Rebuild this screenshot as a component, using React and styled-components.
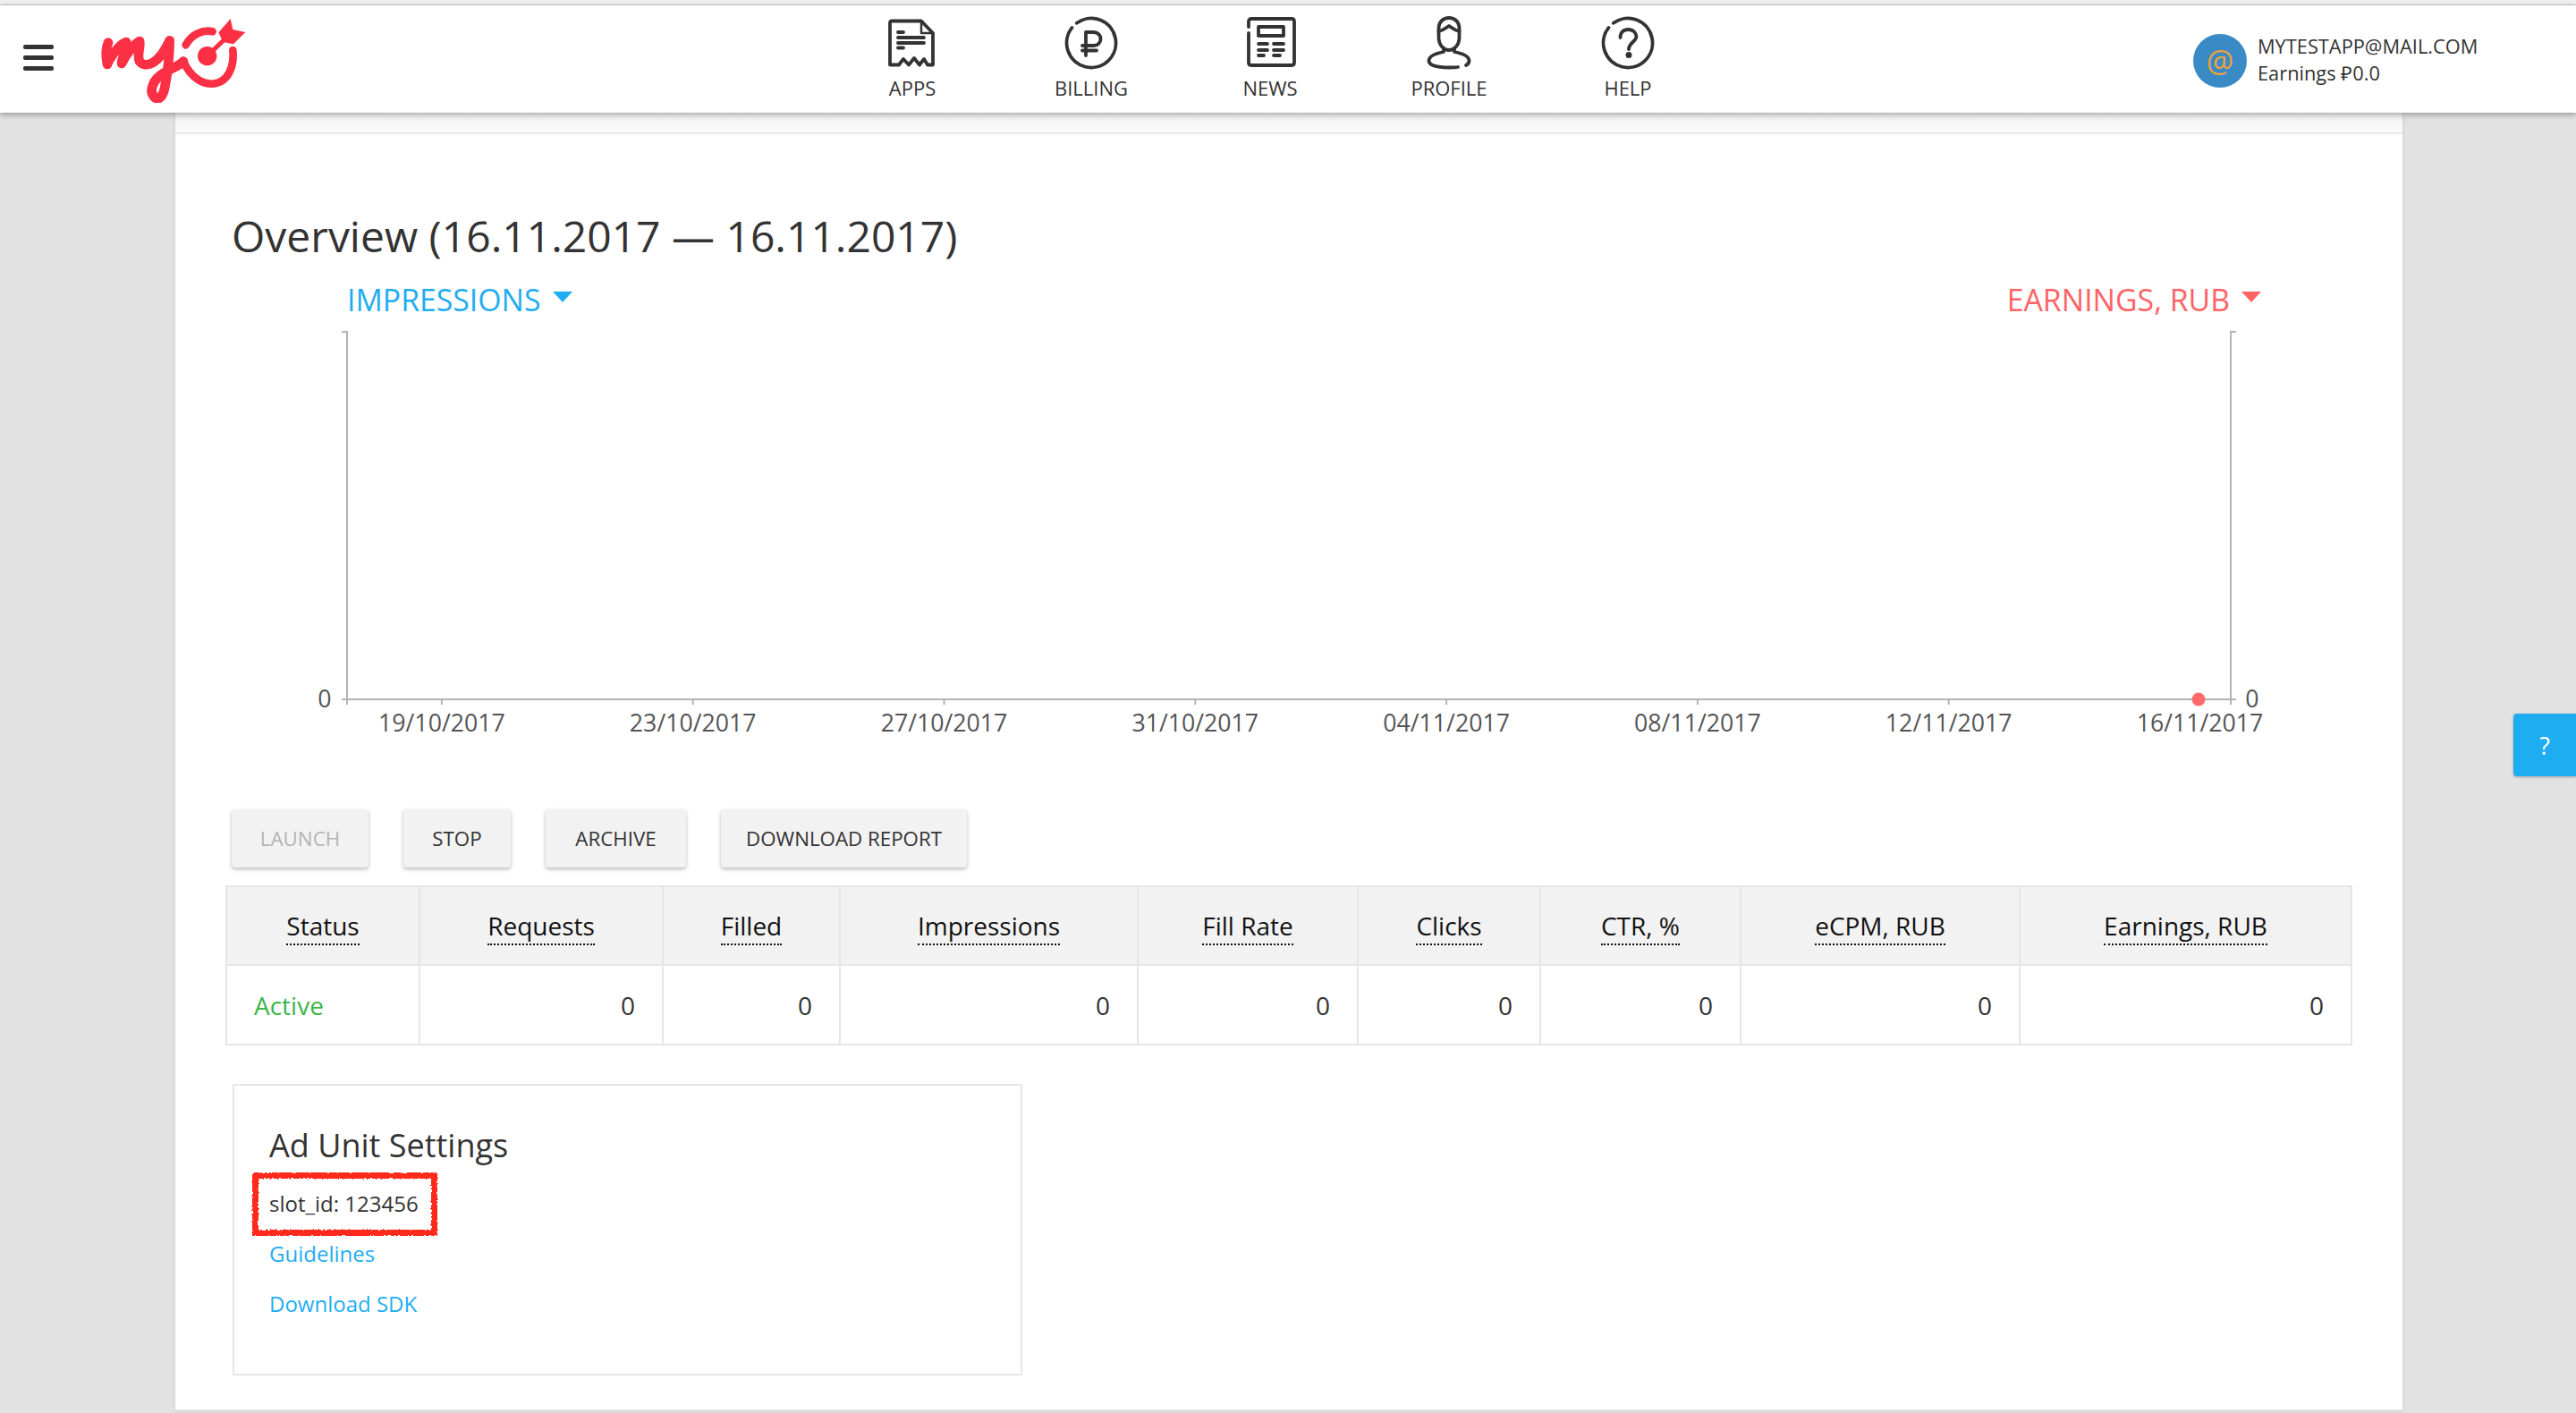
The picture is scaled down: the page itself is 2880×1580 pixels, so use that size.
import React from 'react';
import styled, { createGlobalStyle } from 'styled-components';

const GlobalStyle = createGlobalStyle`
  html, body {
    margin: 0;
    padding: 0;
    background: #e2e2e2;
    font-family: "Open Sans", "Liberation Sans", sans-serif;
    color: #333;
    overflow: hidden;
  }
`;

const Page = styled.div`
  width: 2880px;
  height: 1580px;
  position: relative;
  overflow: hidden;
`;

const TopStrip = styled.div`
  height: 5px;
  background: #f0f0f0;
  border-bottom: 1px solid #cfcfcf;
`;

const Header = styled.header`
  position: relative;
  z-index: 2;
  height: 120px;
  background: #fff;
  box-shadow: 0 2px 7px rgba(0, 0, 0, 0.35);
  display: flex;
  align-items: flex-start;
`;

const Burger = styled.div`
  width: 34px;
  margin: 44px 0 0 26px;
  display: flex;
  flex-direction: column;
  gap: 7px;
`;

const BurgerBar = styled.span`
  height: 5px;
  background: #333;
  border-radius: 2px;
`;

const LogoSvg = styled.svg`
  width: 164px;
  height: 98px;
  margin: 11px 0 0 51px;
`;

const Nav = styled.nav`
  display: flex;
  margin-left: 645px;
`;

const NavItem = styled.div`
  width: 200px;
  display: flex;
  flex-direction: column;
  align-items: center;
  padding-top: 12px;
  font-size: 22px;
  line-height: 30px;
  color: #333;
`;

const NavIcon = styled.svg`
  width: 60px;
  height: 60px;
  margin-bottom: 5px;
  fill: none;
  stroke: #333;
  stroke-width: 3.8;
  stroke-linecap: round;
  stroke-linejoin: round;
`;

const Account = styled.div`
  margin-left: 532px;
  padding-top: 32px;
  display: flex;
  gap: 12px;
`;

const Avatar = styled.div`
  width: 60px;
  height: 60px;
  border-radius: 50%;
  background: #3a8ac5;
  color: #f0a23c;
  display: flex;
  align-items: center;
  justify-content: center;
  font-size: 34px;
`;

const AccountText = styled.div`
  margin-top: -1px;
  font-size: 21.8px;
  line-height: 30px;
  color: #333;
`;

const Card = styled.main`
  width: 2490px;
  height: 1452px;
  margin: 0 0 0 196px;
  background: #fff;
  box-sizing: border-box;
  border-bottom: 2px solid #e2e2e2;
  box-shadow: 0 0 4px rgba(0, 0, 0, 0.1);
`;

const CardStrip = styled.div`
  height: 22px;
  background: linear-gradient(#f3f3f3, #fafafa);
  border-bottom: 2px solid #e8e8e8;
`;

const CardBody = styled.div`
  padding: 0 56px;
`;

const Title = styled.h1`
  margin: 84px 0 0 7px;
  font-size: 48px;
  line-height: 60px;
  font-weight: 400;
  color: #333;
`;

const AxisHeader = styled.div`
  display: flex;
  justify-content: space-between;
  margin-top: 21px;
  padding: 0 102px 0 136px;
`;

const AxisPicker = styled.div`
  display: flex;
  align-items: center;
  gap: 13px;
  font-size: 33.8px;
  line-height: 40px;
  color: ${(p) => p.$color};
`;

const Caret = styled.span`
  width: 0;
  height: 0;
  border-left: 11px solid transparent;
  border-right: 11px solid transparent;
  border-top: 12px solid ${(p) => p.$color};
  margin-bottom: 6px;
`;

const ChartSvg = styled.svg`
  display: block;
  width: 2378px;
  height: 480px;
  margin-top: 5px;
`;

const ChartLabel = styled.text`
  font-family: "Open Sans", "Liberation Sans", sans-serif;
  font-size: 26.7px;
  fill: #555;
`;

const Actions = styled.div`
  display: flex;
  gap: 39px;
  margin: 65px 0 0 7px;
`;

const ActionButton = styled.button`
  width: ${(p) => p.$width}px;
  height: 65px;
  padding: 0;
  border: 0;
  border-radius: 4px;
  background: #f2f2f2;
  box-shadow: 0 2px 4px rgba(0, 0, 0, 0.28);
  font-family: inherit;
  font-size: 22.3px;
  color: ${(p) => (p.disabled ? '#b4b4b4' : '#333')};
`;

const Stats = styled.table`
  width: 2376px;
  margin: 20px 0 0 0;
  border-collapse: collapse;
  table-layout: fixed;
  font-size: 28px;
`;

const HeadCell = styled.th`
  height: 86px;
  padding: 0;
  font-weight: 400;
  background: #f2f2f2;
  border: 2px solid #e6e6e6;
  color: #111;
`;

const HeadLabel = styled.span`
  padding-bottom: 1px;
  border-bottom: 2px dotted #111;
`;

const ValueCell = styled.td`
  height: 87px;
  padding: 0 30px;
  text-align: ${(p) => (p.$status ? 'left' : 'right')};
  color: ${(p) => (p.$status ? '#3cb54a' : '#333')};
  border: 2px solid #e6e6e6;
`;

const SettingsBox = styled.section`
  width: 883px;
  height: 326px;
  box-sizing: border-box;
  margin: 43px 0 0 8px;
  padding: 42px 0 0 39px;
  border: 2px solid #e6e6e6;
`;

const SettingsTitle = styled.h2`
  margin: 0;
  font-size: 36px;
  line-height: 50px;
  font-weight: 400;
  color: #333;
`;

const SlotRow = styled.div`
  position: relative;
  margin-top: 20px;
  font-size: 24px;
  line-height: 40px;
  color: #333;
`;

const Scribble = styled.svg`
  position: absolute;
  left: -19px;
  top: -15px;
  width: 207px;
  height: 71px;
  fill: none;
  overflow: visible;
`;

const SettingsLink = styled.a`
  display: block;
  margin-top: ${(p) => p.$gap}px;
  font-size: 24px;
  line-height: 40px;
  color: #1fadf2;
`;

const HelpTab = styled.div`
  position: absolute;
  right: 0;
  top: 798px;
  width: 70px;
  height: 70px;
  background: #1fadf2;
  border-radius: 4px 0 0 4px;
  box-shadow: 0 1px 3px rgba(0, 0, 0, 0.3);
  color: #fff;
  font-size: 27px;
  display: flex;
  align-items: center;
  justify-content: center;
`;

const dates = ['19/10/2017', '23/10/2017', '27/10/2017', '31/10/2017', '04/11/2017', '08/11/2017', '12/11/2017', '16/11/2017'];

const columns = [
  { name: 'Status', width: 216 },
  { name: 'Requests', width: 272 },
  { name: 'Filled', width: 198 },
  { name: 'Impressions', width: 333 },
  { name: 'Fill Rate', width: 246 },
  { name: 'Clicks', width: 204 },
  { name: 'CTR, %', width: 224 },
  { name: 'eCPM, RUB', width: 312 },
  { name: 'Earnings, RUB', width: 371 },
];

const Logo = () => (
  <LogoSvg viewBox="330 50 492 294" fill="none" stroke="#fc3044" strokeWidth="26" strokeLinecap="round" strokeLinejoin="round">
    <path strokeWidth="32" d="M357 215C350 180 352 160 360 142" />
    <path strokeWidth="32" d="M358 210C375 180 395 150 420 140C425 165 405 190 405 212C420 180 445 150 465 137C470 160 455 180 465 205C480 225 525 225 566 135C565 190 560 240 550 290C545 320 530 340 515 325C495 305 510 265 545 245C575 225 600 220 612 205" />
    <path d="M612 205C640 265 680 282 712 280C760 276 784 225 778 167" />
    <path d="M620 150C640 112 680 98 710 105" />
    <circle cx="692" cy="187" r="32" fill="#fc3044" stroke="none" />
    <path d="M692 187L770 112" strokeWidth="15" />
    <path d="M730 108L770 62L778 98L820 107L780 147L745 140Z" fill="#fc3044" stroke="none" />
  </LogoSvg>
);

const Chart = () => {
  const tickX = (i) => 241.9 + i * 280.8;
  return (
    <ChartSvg viewBox="0 0 2378 480">
      <g stroke="#b3b3b3" strokeWidth="2" fill="none">
        <path d="M130 11H136V428" />
        <path d="M130 422H2248" />
        <path d="M2248 11H2242V428" />
        {dates.map((d, i) => (
          <path key={d} d={`M${tickX(i)} 422V428`} />
        ))}
      </g>
      <circle cx="2206" cy="422" r="7.5" fill="#ff6b6b" />
      <ChartLabel x="111" y="431" textAnchor="middle">0</ChartLabel>
      <ChartLabel x="2266" y="431" textAnchor="middle">0</ChartLabel>
      {dates.map((d, i) => (
        <ChartLabel key={d} x={tickX(i)} y="458" textAnchor="middle">{d}</ChartLabel>
      ))}
    </ChartSvg>
  );
};

export default function App() {
  return (
    <Page>
      <GlobalStyle />
      <TopStrip />
      <Header>
        <Burger>
          <BurgerBar />
          <BurgerBar />
          <BurgerBar />
        </Burger>
        <Logo />
        <Nav>
          <NavItem>
            <NavIcon viewBox="0 0 60 60">
              <path d="M5 54.5V8Q5 5.5 7.5 5.5H40L53 19V54.5H47L43 48L38 54.5L32 47L26 54.5L20 48L15 54.5Z" />
              <path d="M40 5.5V19H53" strokeWidth="2.5" />
              <path d="M14 18H20M14 24H43M14 30H43M14 35.5H20" />
            </NavIcon>
            APPS
          </NavItem>
          <NavItem>
            <NavIcon viewBox="0 0 60 60">
              <path d="M13.8 7.8A27.5 27.5 0 1 1 8.5 12.9" />
              <path d="M24 44V18H33A7.5 7.5 0 0 1 33 33H20M20 38.5H36" />
            </NavIcon>
            BILLING
          </NavItem>
          <NavItem>
            <NavIcon viewBox="0 0 60 60">
              <path d="M6 12V6Q6 3 9 3H54Q57 3 57 6V52Q57 55 54 55H9Q6 55 6 52V19" />
              <path d="M17 12H45V22H17Z" />
              <path d="M17 31H27M34 31H45M17 38H27M34 38H45M17 44H23M34 44H41" />
            </NavIcon>
            NEWS
          </NavItem>
          <NavItem>
            <NavIcon viewBox="0 0 60 60">
              <path d="M18.5 14C18.5 6 24 2 30 2C36 2 41.5 6 41.5 14V24C41.5 32 36 38 30 38C24 38 18.5 32 18.5 24Z" />
              <path d="M18.5 17C24 16 27 13 30 11C33 13 36 16 41.5 17" />
              <path d="M24 36V40C14 42 7.5 45 7.5 50C7.5 55 16 57.5 30 57.5C33 57.5 37 57.5 40 57M36 36V40C46 42 52.5 45 52.5 50C52.5 52 51 54 49 55" />
            </NavIcon>
            PROFILE
          </NavItem>
          <NavItem>
            <NavIcon viewBox="0 0 60 60">
              <path d="M13.8 7.8A27.5 27.5 0 1 1 8.5 12.9" />
              <path d="M21.5 24C21.5 18 25 15 30.5 15C36 15 39.5 19 39.5 23C39.5 28 31 30 31 37" />
              <circle cx="31" cy="43.5" r="1.6" fill="#333" />
            </NavIcon>
            HELP
          </NavItem>
        </Nav>
        <Account>
          <Avatar>@</Avatar>
          <AccountText>
            MYTESTAPP@MAIL.COM
            <br />
            Earnings ₽0.0
          </AccountText>
        </Account>
      </Header>
      <Card>
        <CardStrip />
        <CardBody>
          <Title>Overview (16.11.2017 — 16.11.2017)</Title>
          <AxisHeader>
            <AxisPicker $color="#1fadf2">IMPRESSIONS<Caret $color="#1fadf2" /></AxisPicker>
            <AxisPicker $color="#ff6366">EARNINGS, RUB<Caret $color="#ff6366" /></AxisPicker>
          </AxisHeader>
          <Chart />
          <Actions>
            <ActionButton $width={153} disabled>LAUNCH</ActionButton>
            <ActionButton $width={120}>STOP</ActionButton>
            <ActionButton $width={157}>ARCHIVE</ActionButton>
            <ActionButton $width={275}>DOWNLOAD REPORT</ActionButton>
          </Actions>
          <Stats>
            <colgroup>
              {columns.map((c) => (
                <col key={c.name} width={c.width} />
              ))}
            </colgroup>
            <thead>
              <tr>
                {columns.map((c) => (
                  <HeadCell key={c.name}><HeadLabel>{c.name}</HeadLabel></HeadCell>
                ))}
              </tr>
            </thead>
            <tbody>
              <tr>
                <ValueCell $status>Active</ValueCell>
                {columns.slice(1).map((c) => (
                  <ValueCell key={c.name}>0</ValueCell>
                ))}
              </tr>
            </tbody>
          </Stats>
          <SettingsBox>
            <SettingsTitle>Ad Unit Settings</SettingsTitle>
            <SlotRow>
              slot_id: 123456
              <Scribble viewBox="0 0 207 71">
                <filter id="rough" x="-5%" y="-5%" width="110%" height="110%">
                  <feTurbulence type="fractalNoise" baseFrequency="0.5" numOctaves="2" seed="4" />
                  <feDisplacementMap in="SourceGraphic" scale="4" />
                </filter>
                <rect x="3.5" y="3.5" width="200" height="64" stroke="#ff2a1e" strokeWidth="7" filter="url(#rough)" />
              </Scribble>
            </SlotRow>
            <SettingsLink $gap={16}>Guidelines</SettingsLink>
            <SettingsLink $gap={16}>Download SDK</SettingsLink>
          </SettingsBox>
        </CardBody>
      </Card>
      <HelpTab>?</HelpTab>
    </Page>
  );
}
